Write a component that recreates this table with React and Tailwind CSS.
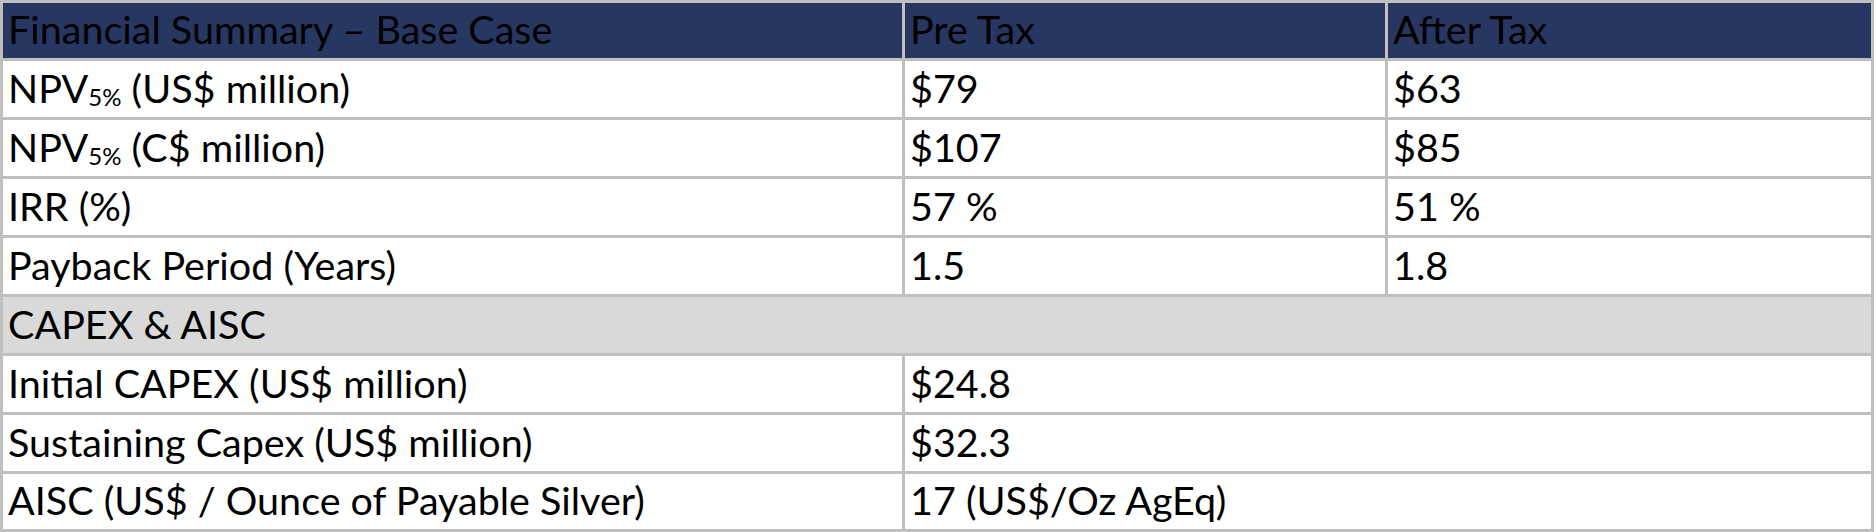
import React from "react";

const font = { fontFamily: "Lato, 'Noto Sans', sans-serif" };

function Cell({ children, className = "" }) {
  return (
    <div className={`flex items-center pl-[5px] pb-[3px] text-[39.5px] leading-none text-black whitespace-nowrap ${className}`}>
      {children}
    </div>
  );
}

function NPV({ unit }) {
  return (
    <span>
      NPV<sub className="text-[24px] relative top-[3px]">5%</sub> ({unit} million)
    </span>
  );
}

export default function App() {
  return (
    <div className="w-[1876px] h-[532px] bg-white" style={font}>
      <div className="grid w-[1874px] grid-cols-[899px_480px_483px] grid-rows-[55px_56px_56px_56px_56px_56px_56px_56px_55px] gap-[3px] bg-[#bfbfbf] p-[3px]">
        <Cell className="bg-[#273761]">Financial Summary – Base Case</Cell>
        <Cell className="bg-[#273761]">Pre Tax</Cell>
        <Cell className="bg-[#273761]">After Tax</Cell>

        <Cell className="bg-white"><NPV unit="US$" /></Cell>
        <Cell className="bg-white">$79</Cell>
        <Cell className="bg-white">$63</Cell>

        <Cell className="bg-white"><NPV unit="C$" /></Cell>
        <Cell className="bg-white">$107</Cell>
        <Cell className="bg-white">$85</Cell>

        <Cell className="bg-white">IRR (%)</Cell>
        <Cell className="bg-white">57 %</Cell>
        <Cell className="bg-white">51 %</Cell>

        <Cell className="bg-white">Payback Period (Years)</Cell>
        <Cell className="bg-white">1.5</Cell>
        <Cell className="bg-white">1.8</Cell>

        <Cell className="bg-[#d9d9d9] col-span-3">CAPEX &amp; AISC</Cell>

        <Cell className="bg-white">Initial CAPEX (US$ million)</Cell>
        <Cell className="bg-white col-span-2">$24.8</Cell>

        <Cell className="bg-white">Sustaining Capex (US$ million)</Cell>
        <Cell className="bg-white col-span-2">$32.3</Cell>

        <Cell className="bg-white">AISC (US$ / Ounce of Payable Silver)</Cell>
        <Cell className="bg-white col-span-2">17 (US$/Oz AgEq)</Cell>
      </div>
    </div>
  );
}
